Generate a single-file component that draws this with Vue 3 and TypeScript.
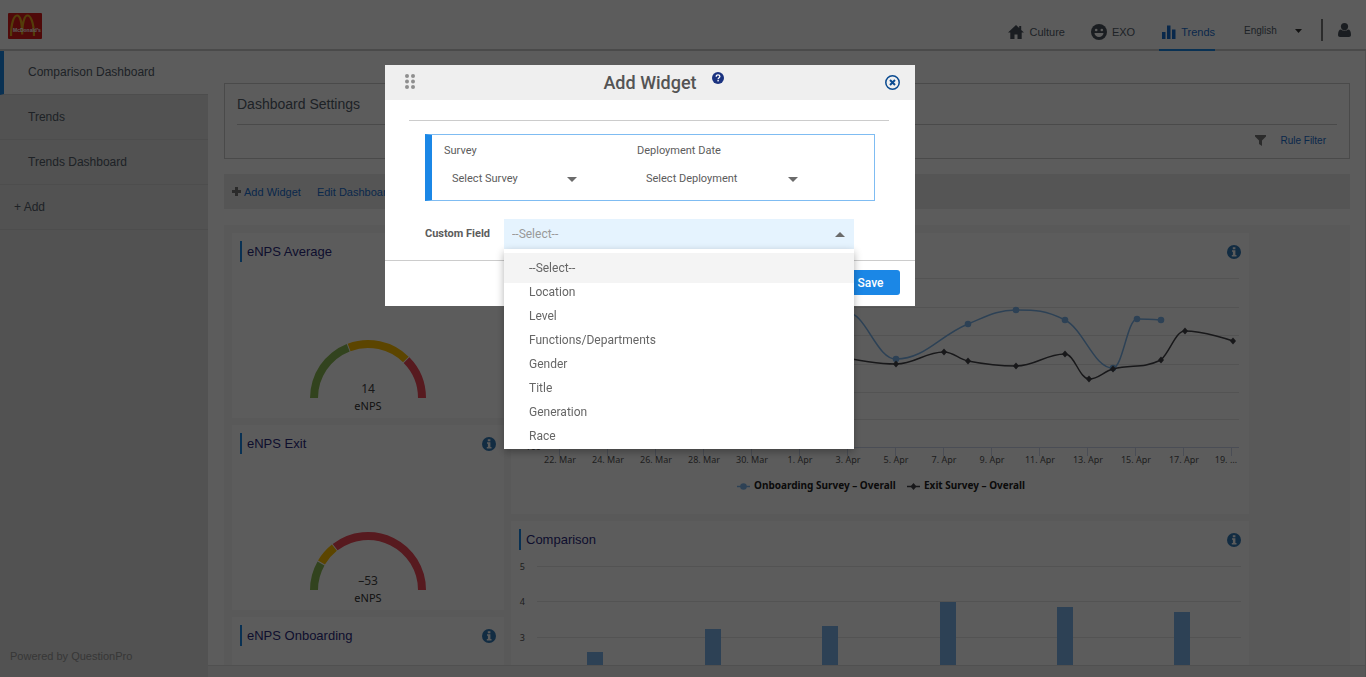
<script setup lang="ts">
import { ref } from 'vue'

type Point = [number, number]

const sections = ['Comparison Dashboard', 'Trends', 'Trends Dashboard']

const fieldOptions = [
  '--Select--',
  'Location',
  'Level',
  'Functions/Departments',
  'Gender',
  'Title',
  'Generation',
  'Race',
]
const customField = ref('--Select--')

interface Reading {
  score: string
  stops: [number, number]
}
interface Gauge {
  title: string
  info: boolean
  reading?: Reading
}
const gauges: Gauge[] = [
  { title: 'eNPS Average', info: false, reading: { score: '14', stops: [69, 135] } },
  { title: 'eNPS Exit', info: true, reading: { score: '–53', stops: [30, 52] } },
  { title: 'eNPS Onboarding', info: true },
]
const gaugeColors = ['#8cba55', '#ffc000', '#f04858']

// Ring segment on a half circle; angles run in degrees from the left end.
function arc(from: number, to: number): string {
  const at = (r: number, deg: number) => {
    const a = Math.PI - (deg * Math.PI) / 180
    return `${(60 + r * Math.cos(a)).toFixed(2)} ${(60 - r * Math.sin(a)).toFixed(2)}`
  }
  return `M${at(58, from)}A58 58 0 0 1 ${at(58, to)}L${at(50, to)}A50 50 0 0 0 ${at(50, from)}Z`
}
function gaugeArcs(reading: Reading) {
  const edges = [0, reading.stops[0], reading.stops[1], 180]
  return gaugeColors.map((color, i) => ({
    color,
    d: arc(edges[i] + (i > 0 ? 0.5 : 0), edges[i + 1] - (i < 2 ? 0.5 : 0)),
  }))
}

const trendGrid = [16, 45, 73, 102, 130, 157]
const trendTicks = [
  '22. Mar', '24. Mar', '26. Mar', '28. Mar', '30. Mar', '1. Apr', '3. Apr', '5. Apr',
  '7. Apr', '9. Apr', '11. Apr', '13. Apr', '15. Apr', '17. Apr',
].map((label, i) => ({ label, x: 48 + i * 48 }))

const onboarding: Point[] = [
  [289, 80], [335, 50], [385, 97], [457, 62], [505, 48], [554, 58], [602, 106], [626, 57], [650, 58],
]
const exit: Point[] = [
  [289, 84], [385, 102], [433, 90], [457, 99], [505, 104], [554, 92], [578, 117], [602, 107],
  [650, 98], [674, 69], [722, 79],
]

function spline(pts: Point[]): string {
  let d = `M${pts[0][0]} ${pts[0][1]}`
  let prev: Point = pts[0]
  for (let i = 1; i < pts.length; i++) {
    const [x, y] = pts[i]
    let left: Point = [x, y]
    let right: Point = [x, y]
    if (i < pts.length - 1) {
      const [lx, ly] = pts[i - 1]
      const [nx, ny] = pts[i + 1]
      const ax = (1.5 * x + lx) / 2.5
      let ay = (1.5 * y + ly) / 2.5
      const bx = (1.5 * x + nx) / 2.5
      let by = (1.5 * y + ny) / 2.5
      const shift = ((by - ay) * (bx - x)) / (bx - ax) + y - by
      ay += shift
      by += shift
      if (ay > ly && ay > y) { ay = Math.max(ly, y); by = 2 * y - ay }
      else if (ay < ly && ay < y) { ay = Math.min(ly, y); by = 2 * y - ay }
      if (by > ny && by > y) { by = Math.max(ny, y); ay = 2 * y - by }
      else if (by < ny && by < y) { by = Math.min(ny, y); ay = 2 * y - by }
      left = [ax, ay]
      right = [bx, by]
    }
    d += `C${prev[0]} ${prev[1]} ${left[0]} ${left[1]} ${x} ${y}`
    prev = right
  }
  return d
}

const barGrid = [
  { label: '5', y: 17 },
  { label: '4', y: 52 },
  { label: '3', y: 88 },
]
const bars = [
  { x: 76, y: 102 }, { x: 194, y: 79 }, { x: 311, y: 76 },
  { x: 429, y: 52 }, { x: 546, y: 57 }, { x: 663, y: 62 },
]
</script>

<template>
  <div class="page">
    <header class="topbar">
      <svg class="logo" viewBox="0 0 34 26" role="img" aria-label="McDonald's">
        <rect width="34" height="26" rx="1" fill="#da1a1a" />
        <path d="M3 23C3 10 6 2.500 9 2.500s5.200 7 5.200 19M14.200 21.500C14.200 10 16.500 2.500 19.500 2.500s6.500 7 6.500 20.500" fill="none" stroke="#e8a81c" stroke-width="2.200" />
        <text x="5" y="19" class="logo-text">McDonald's</text>
      </svg>
      <nav class="apps">
        <a href="#" class="app">
          <svg width="16" height="16" viewBox="0 0 16 16"><path d="M8 1 0 8.500h2.300V15h4.200v-4.500h3V15h4.200V8.500H16L13.200 6V2h-2v2z" fill="currentColor" /></svg>
          Culture
        </a>
        <a href="#" class="app">
          <svg width="16" height="16" viewBox="0 0 16 16"><circle cx="8" cy="8" r="8" fill="currentColor" /><circle cx="5.200" cy="6" r="1.300" fill="#fff" /><circle cx="10.800" cy="6" r="1.300" fill="#fff" /><path d="M3.500 9h9a4.500 4 0 0 1-9 0z" fill="#fff" /></svg>
          EXO
        </a>
        <a href="#" class="app current">
          <svg width="14" height="16" viewBox="0 0 14 16"><path d="M0 8h3.500v7H0zM5 1.500h3.500V15H5zM10 5.500h3.500V15H10z" fill="currentColor" /></svg>
          Trends
        </a>
        <label class="language">
          <select aria-label="Language"><option>English</option></select>
          <svg width="7" height="4" viewBox="0 0 7 4"><path d="M0 0h7L3.500 4z" fill="#333" /></svg>
        </label>
        <button class="user" aria-label="Account">
          <svg width="13" height="14" viewBox="0 0 13 14"><circle cx="6.500" cy="3.600" r="3.600" fill="currentColor" /><path d="M0 12c0-3.500 1-5.500 3-5.500 1 .8 2 1.200 3.500 1.200S9 7.300 10 6.500c2 0 3 2 3 5.500 0 1.300-.8 2-2 2H2c-1.200 0-2-.7-2-2z" fill="currentColor" /></svg>
        </button>
      </nav>
    </header>

    <div class="body">
      <aside class="sidebar">
        <a v-for="(s, i) in sections" :key="s" href="#" class="section" :class="{ active: i === 0 }">{{ s }}</a>
        <a href="#" class="section add">+ Add</a>
        <p class="powered">Powered by QuestionPro</p>
      </aside>

      <main class="main">
        <div class="content">
          <section class="settings">
            <h1>Dashboard Settings</h1>
            <div class="filter">
              <svg width="11" height="11" viewBox="0 0 11 11"><path d="M0 0h11v1.500L7 5.500V11L4 9V5.500L0 1.500z" fill="#777" /></svg>
              <a href="#">Rule Filter</a>
            </div>
          </section>

          <div class="toolbar">
            <svg width="9" height="9" viewBox="0 0 9 9"><path d="M3 0h3v3h3v3H6v3H3V6H0V3h3z" fill="#777" /></svg>
            <a href="#">Add Widget</a>
            <a href="#" class="edit">Edit Dashboard</a>
          </div>

          <div class="board">
            <div class="column">
              <article v-for="g in gauges" :key="g.title" class="card gauge-card">
                <div class="card-head">
                  <h2>{{ g.title }}</h2>
                  <svg v-if="g.info" class="info" viewBox="0 0 14 14"><circle cx="7" cy="7" r="7" fill="#337ab7" /><path d="M5.800 2.200h2.600v2H5.800zM5 5.300h3.400v4.700h1.100v1.500H4.800V10h1.100V6.800H5z" fill="#fff" /></svg>
                </div>
                <svg v-if="g.reading" class="gauge" viewBox="0 0 120 84">
                  <path v-for="a in gaugeArcs(g.reading)" :key="a.color" :d="a.d" :fill="a.color" />
                  <text x="60" y="55" class="score">{{ g.reading.score }}</text>
                  <text x="60" y="72" class="unit">eNPS</text>
                </svg>
              </article>
            </div>

            <div class="column">
              <article class="card chart-card">
                <div class="card-head">
                  <h2>Trend</h2>
                  <svg class="info" viewBox="0 0 14 14"><circle cx="7" cy="7" r="7" fill="#337ab7" /><path d="M5.800 2.200h2.600v2H5.800zM5 5.300h3.400v4.700h1.100v1.500H4.800V10h1.100V6.800H5z" fill="#fff" /></svg>
                </div>
                <svg class="chart" viewBox="0 0 738 252">
                  <path v-for="y in trendGrid" :key="y" :d="`M36 ${y}.5H728`" stroke="#e6e6e6" />
                  <path d="M36 185.500H728" stroke="#ccd6eb" />
                  <text x="30" y="188" class="axis end">-100</text>
                  <g v-for="t in trendTicks" :key="t.label">
                    <path :d="`M${t.x}.5 186v8`" stroke="#ccd6eb" />
                    <text :x="t.x + 1" y="201" class="axis mid">{{ t.label }}</text>
                  </g>
                  <path d="M720.500 186v8" stroke="#ccd6eb" />
                  <text x="726" y="201" class="axis end">19. …</text>
                  <path :d="spline(onboarding)" fill="none" stroke="#7cb5ec" stroke-width="1.500" />
                  <circle v-for="p in onboarding" :key="p[0]" :cx="p[0]" :cy="p[1]" r="3.300" fill="#7cb5ec" />
                  <path :d="spline(exit)" fill="none" stroke="#434348" stroke-width="1.500" />
                  <path v-for="p in exit" :key="p[0]" :d="`M${p[0]} ${p[1] - 3.500}l3 3.500-3 3.500-3-3.500z`" fill="#434348" />
                  <path d="M226 224.500h13" stroke="#7cb5ec" stroke-width="1.500" />
                  <circle cx="232.500" cy="224.500" r="3.300" fill="#7cb5ec" />
                  <text x="243" y="227" class="legend">Onboarding Survey – Overall</text>
                  <path d="M396 224.500h13" stroke="#434348" stroke-width="1.500" />
                  <path d="M402.500 221l3 3.500-3 3.500-3-3.500z" fill="#434348" />
                  <text x="413" y="227" class="legend">Exit Survey – Overall</text>
                </svg>
              </article>

              <article class="card chart-card">
                <div class="card-head">
                  <h2>Comparison</h2>
                  <svg class="info" viewBox="0 0 14 14"><circle cx="7" cy="7" r="7" fill="#337ab7" /><path d="M5.800 2.200h2.600v2H5.800zM5 5.300h3.400v4.700h1.100v1.500H4.800V10h1.100V6.800H5z" fill="#fff" /></svg>
                </div>
                <svg class="chart" viewBox="0 0 738 252">
                  <g v-for="l in barGrid" :key="l.label">
                    <path :d="`M26 ${l.y - 1}.5H730`" stroke="#e6e6e6" />
                    <text x="14" :y="l.y + 3" class="axis end">{{ l.label }}</text>
                  </g>
                  <rect v-for="b in bars" :key="b.x" :x="b.x" :y="b.y" width="16" :height="190 - b.y" fill="#7cb5ec" />
                </svg>
              </article>
            </div>
          </div>
        </div>
        <footer class="strip"></footer>
      </main>
    </div>

    <div class="overlay">
      <section class="dialog" role="dialog" aria-labelledby="dialog-title">
        <header class="dialog-head">
          <svg class="grip" viewBox="0 0 10 15" fill="#8f8f8f"><circle cx="2" cy="2" r="2" /><circle cx="8" cy="2" r="2" /><circle cx="2" cy="7.500" r="2" /><circle cx="8" cy="7.500" r="2" /><circle cx="2" cy="13" r="2" /><circle cx="8" cy="13" r="2" /></svg>
          <h2 id="dialog-title">Add Widget</h2>
          <button class="help" aria-label="Help">
            <svg width="12" height="12" viewBox="0 0 12 12"><circle cx="6" cy="6" r="6" fill="#1b3380" /><path d="M4.200 4.700C4.200 3.500 5 2.900 6 2.900s1.900.6 1.900 1.600C7.900 5.700 6.100 5.700 6.100 7.200" fill="none" stroke="#fff" stroke-width="1.300" /><rect x="5.400" y="8" width="1.400" height="1.400" fill="#fff" /></svg>
          </button>
          <button class="close" aria-label="Close">
            <svg width="15" height="15" viewBox="0 0 15 15" fill="none" stroke="#0a4a90"><circle cx="7.500" cy="7.500" r="6.700" stroke-width="1.500" /><path d="M5 5l5 5M10 5l-5 5" stroke-width="2" /></svg>
          </button>
        </header>
        <div class="dialog-body">
          <hr />
          <div class="source">
            <div class="field survey">
              <label for="survey">Survey</label>
              <div class="picker">
                <select id="survey"><option>Select Survey</option></select>
                <svg width="10" height="5" viewBox="0 0 10 5"><path d="M0 0h10L5 5z" fill="#6b6b6b" /></svg>
              </div>
            </div>
            <div class="field deployment">
              <label for="deployment">Deployment Date</label>
              <div class="picker">
                <select id="deployment"><option>Select Deployment</option></select>
                <svg width="10" height="5" viewBox="0 0 10 5"><path d="M0 0h10L5 5z" fill="#6b6b6b" /></svg>
              </div>
            </div>
          </div>
          <div class="custom">
            <label for="custom-field">Custom Field</label>
            <div class="combo">
              <select id="custom-field" v-model="customField">
                <option v-for="o in fieldOptions" :key="o">{{ o }}</option>
              </select>
              <svg width="10" height="5" viewBox="0 0 10 5"><path d="M0 5h10L5 0z" fill="#6b6b6b" /></svg>
              <ul class="menu" role="listbox" aria-label="Custom Field">
                <li
                  v-for="o in fieldOptions"
                  :key="o"
                  role="option"
                  :aria-selected="o === customField"
                  :class="{ chosen: o === customField }"
                  @click="customField = o"
                >{{ o }}</li>
              </ul>
            </div>
          </div>
        </div>
        <footer class="dialog-foot">
          <button class="save">Save</button>
        </footer>
      </section>
    </div>
  </div>
</template>

<style>
body { margin: 0; }
</style>

<style scoped>
* { box-sizing: border-box; }
h1, h2, p, ul { margin: 0; padding: 0; font-weight: 400; }
button { border: 0; padding: 0; background: none; font: inherit; color: inherit; cursor: pointer; }
svg { display: block; flex: none; }
a { text-decoration: none; color: #1b6fd0; }

.page {
  height: 100vh;
  display: flex;
  flex-direction: column;
  overflow: hidden;
  background: #fff;
  color: #545e6b;
  font: 12px/16px "Liberation Sans", Arial, sans-serif;
}

.topbar {
  flex: none;
  z-index: 1;
  display: flex;
  justify-content: space-between;
  align-items: flex-start;
  height: 50px;
  padding: 0 15px 0 8px;
  border-bottom: 1px solid #ccc;
  box-shadow: 0 1px 0 #ccc;
}
.logo { width: 34px; height: 26px; margin-top: 13px; }
.logo-text { font: bold 5px "Liberation Sans", Arial, sans-serif; fill: #fff; }
.apps { display: flex; height: 51px; }
.app {
  display: flex;
  align-items: center;
  gap: 5px;
  height: 51px;
  margin-right: 26px;
  padding-top: 14px;
  border-bottom: 2px solid transparent;
  color: #545e6b;
  font-size: 11px;
}
.app svg { color: #4a525c; }
.app.current { margin-right: 29px; padding-left: 3px; border-color: #1b87e6; color: #1b6fd0; }
.app:nth-child(2) { margin-right: 24px; }
.app.current svg { color: #1b6fd0; }
.language { display: flex; align-items: center; padding-top: 10px; }
.language select {
  appearance: none;
  width: 51px;
  padding: 0;
  border: 0;
  background: none;
  color: #545e6b;
  font: 10px/16px "Liberation Sans", Arial, sans-serif;
}
.user {
  height: 22px;
  margin: 19px 0 0 19px;
  padding-left: 15px;
  border-left: 2px solid #777;
  color: #4a525c;
}

.body { flex: 1; display: flex; min-height: 0; }
.sidebar {
  flex: none;
  display: flex;
  flex-direction: column;
  width: 208px;
  background: #e2e2e2;
}
.section {
  height: 45px;
  padding-left: 28px;
  border-bottom: 1px solid #d4d4d4;
  color: #545e6b;
  line-height: 45px;
}
.section.active { border-left: 4px solid #1b87e6; padding-left: 24px; background: #fff; }
.section.add { padding-left: 14px; }
.powered { margin: auto 0 13px 10px; color: #999; font-size: 11px; }

.main {
  flex: 1;
  display: flex;
  flex-direction: column;
  min-width: 0;
  border-right: 1px solid #ddd;
}
.content {
  flex: 1;
  min-height: 0;
  padding: 33px 15px 0 16px;
  overflow: hidden;
}
.strip { flex: none; height: 12px; border-top: 1px solid #ddd; background: #f0f0f0; }

.settings {
  height: 76px;
  padding: 0 12px;
  border: 1px solid #ccc;
}
.settings h1 { height: 41px; border-bottom: 1px solid #ccc; font-size: 14px; line-height: 41px; }
.filter {
  display: flex;
  align-items: center;
  justify-content: flex-end;
  gap: 14px;
  height: 31px;
  padding-right: 11px;
  font-size: 10px;
}
.toolbar {
  display: flex;
  align-items: center;
  gap: 3px;
  height: 35px;
  margin: 15px 0 16px;
  padding-left: 8px;
  background: #ececec;
  font-size: 11px;
}
.toolbar .edit { margin-left: 13px; }

.board {
  display: grid;
  grid-template-columns: 272fr 738fr 86fr;
  gap: 7px;
  padding: 8px;
  background: #f7f7f7;
}
.column { display: flex; flex-direction: column; gap: 7px; min-width: 0; }
.card { background: #fff; }
.gauge-card { height: 185px; }
.chart-card { min-height: 281px; }
.card-head {
  display: flex;
  align-items: center;
  justify-content: space-between;
  height: 29px;
  padding: 8px 8px 0;
}
.card-head h2 {
  padding-left: 5px;
  border-left: 2px solid #1b87e6;
  color: #2b2b80;
  font-size: 13px;
  line-height: 21px;
}
.info { width: 14px; height: 14px; }
.gauge { width: 120px; height: 84px; margin: 76px auto 0; }
.score { font: 12px "Noto Sans", sans-serif; text-anchor: middle; fill: #444; }
.unit { font: 11px "Noto Sans", sans-serif; text-anchor: middle; fill: #333; }
.chart { width: 100%; height: auto; }
.axis { font: 9px "Noto Sans", sans-serif; fill: #555; }
.mid { text-anchor: middle; }
.end { text-anchor: end; }
.legend { font: bold 10px "Noto Sans", sans-serif; fill: #222; }

.overlay {
  position: fixed;
  inset: 0;
  z-index: 2;
  padding: 65px 0 0 calc(50% - 298px);
  background: rgba(0, 0, 0, 0.64);
  color: #5c5c5c;
  font: 11px/16px Roboto, sans-serif;
}
.dialog { width: 530px; background: #fff; }
.dialog-head {
  position: relative;
  display: flex;
  align-items: center;
  justify-content: center;
  height: 35px;
  background: #efefef;
}
.dialog-head h2 { color: #545454; font-size: 18px; font-weight: 500; line-height: 24px; }
.grip { position: absolute; left: 20px; top: 9px; width: 10px; height: 15px; }
.help { position: absolute; left: 327px; top: 7px; }
.close { position: absolute; right: 15px; top: 10px; }
.dialog-body { padding: 20px 26px 11px 24px; }
hr { margin: 0; border: 0; border-top: 1px solid #ccc; }
.source {
  display: flex;
  height: 67px;
  margin: 13px 14px 0 16px;
  padding: 8px 0 0 12px;
  border: 1px solid #7fbcf2;
  border-left: 7px solid #1b87e6;
}
.field { display: flex; flex-direction: column; gap: 12px; }
.survey { width: 193px; }
.deployment { width: 222px; }
.picker { display: flex; align-items: center; padding-left: 8px; }
.survey .picker { width: 133px; }
.deployment .picker { width: 161px; padding-left: 9px; }
select { appearance: none; padding: 0; border: 0; background: none; color: inherit; font: inherit; }
.picker select { flex: 1; min-width: 0; }
.custom { display: flex; align-items: center; margin: 18px 0 0 16px; }
.custom label { width: 79px; font-weight: 700; }
.combo {
  position: relative;
  display: flex;
  align-items: center;
  width: 350px;
  height: 30px;
  padding: 0 9px 0 8px;
  background: #e5f3fe;
}
.combo select { flex: 1; height: 28px; color: #999; font-size: 12px; }
.menu {
  position: absolute;
  top: 100%;
  left: 0;
  right: 0;
  height: 200px;
  padding-top: 4px;
  overflow: hidden;
  background: #fff;
  box-shadow: 0 3px 8px rgba(0, 0, 0, 0.3);
  list-style: none;
}
.menu li { height: 24px; padding-left: 25px; line-height: 18px; color: #666; font-size: 12px; }
.menu .chosen { height: 30px; line-height: 30px; background: #f4f4f4; }
.dialog-foot {
  display: flex;
  justify-content: flex-end;
  padding: 9px 15px 11px;
  border-top: 1px solid #ccc;
}
.save {
  width: 59px;
  height: 25px;
  border-radius: 3px;
  background: #1b87e6;
  color: #fff;
  font-size: 12px;
  font-weight: 500;
}
</style>
